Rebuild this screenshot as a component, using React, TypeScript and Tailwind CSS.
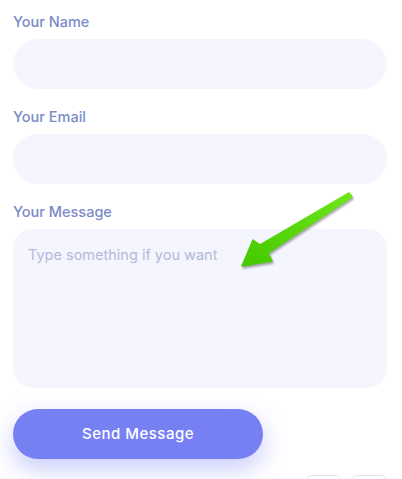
export default function App() {
  const font = { fontFamily: "Inter, 'Open Sans', sans-serif" }
  return (
    <div className="w-[402px] h-[479px] bg-white overflow-hidden relative" style={font}>
      <form className="flex flex-col pl-[13px] pt-[12px]">
        <div className="flex flex-col">
          <label className="text-[14.5px] leading-5 font-medium text-[#7a8bc6] mb-[7px]">Your Name</label>
          <input className="w-[374px] h-[50px] rounded-full bg-[#f4f5fd] outline-none px-[15px]" />
        </div>
        <div className="flex flex-col mt-[18px]">
          <label className="text-[14.5px] leading-5 font-medium text-[#7a8bc6] mb-[7px]">Your Email</label>
          <input className="w-[374px] h-[50px] rounded-full bg-[#f4f5fd] outline-none px-[15px]" />
        </div>
        <div className="flex flex-col mt-[18px] relative">
          <label className="text-[14.5px] leading-5 font-medium text-[#7a8bc6] mb-[7px]">Your Message</label>
          <textarea
            placeholder="Type something if you want"
            className="w-[374px] h-[159px] rounded-[20px] bg-[#f4f5fd] outline-none px-[15px] py-[15px] text-[14.5px] resize-none placeholder:text-[#b3bad9]"
          />
          <svg
            className="absolute left-[222px] top-[-13px]"
            width="125"
            height="85"
            viewBox="0 0 125 85"
            style={{ filter: "drop-shadow(1px 2px 1px rgba(60,60,60,0.45))" }}
          >
            <defs>
              <linearGradient id="g" x1="1" y1="0" x2="0" y2="1">
                <stop offset="0" stopColor="#6ee61a" />
                <stop offset="1" stopColor="#44c800" />
              </linearGradient>
            </defs>
            <path d="M114,4 L117,8 L33,64 L37,72 L7,77 L18,51 L25,56 Z" fill="url(#g)" stroke="url(#g)" strokeWidth="1.5" strokeLinejoin="round" />
          </svg>
        </div>
        <button
          type="button"
          className="mt-[21px] w-[250px] h-[50px] rounded-full bg-[#7680f2] text-white text-[15px] font-medium tracking-[0.5px] shadow-[0_10px_25px_rgba(118,128,242,0.4)]"
        >
          Send Message
        </button>
      </form>
      <div className="absolute left-[306px] top-[475px] flex gap-[10px]">
        <div className="w-[35px] h-[30px] rounded-[6px] border border-[#e6e8ef]" />
        <div className="w-[36px] h-[30px] rounded-[6px] border border-[#e6e8ef]" />
      </div>
    </div>
  )
}
